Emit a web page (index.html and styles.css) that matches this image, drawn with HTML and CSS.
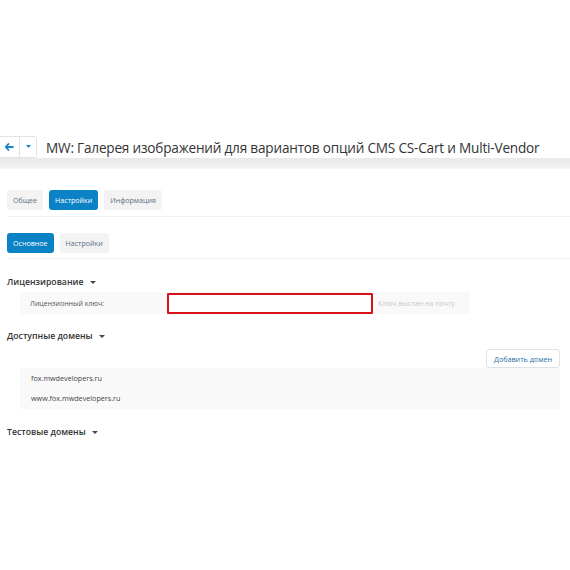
FILE: index.html
```html
<!DOCTYPE html>
<html lang="en">

<head>
    <meta charset="UTF-8">
    <link rel="stylesheet" href="styles.css">
</head>

<body>
    <div class="page">
        <div class="title-bar">
            <div class="nav-group">
                <button class="nav-btn nav-back">
                    <svg width="9" height="8" viewBox="0 0 9 8"><path d="M4 0.5 L0.8 4 L4 7.5 M1 4 H8.5" fill="none" stroke="#1a82c8" stroke-width="1.8"/></svg>
                </button>
                <button class="nav-btn nav-more">
                    <svg width="5" height="3" viewBox="0 0 5 3"><path d="M0 0 H5 L2.5 3 Z" fill="#1a82c8"/></svg>
                </button>
            </div>
            <h1 class="page-title">MW: Галерея изображений для вариантов опций CMS CS-Cart и Multi-Vendor</h1>
        </div>
        <div class="title-shadow"></div>

        <div class="content">
            <div class="tabs">
                <span class="tab">Общее</span>
                <span class="tab active">Настройки</span>
                <span class="tab">Информация</span>
            </div>

            <div class="tabs sub-tabs">
                <span class="tab active">Основное</span>
                <span class="tab">Настройки</span>
            </div>

            <h2 class="section-title">Лицензирование <span class="caret"></span></h2>
            <div class="field-row">
                <label class="field-label">Лицензионный ключ:</label>
                <div class="field-input"></div>
                <span class="field-hint">Ключ выслан на почту</span>
            </div>

            <h2 class="section-title domains-title">Доступные домены <span class="caret"></span></h2>
            <div class="toolbar">
                <button class="add-button">Добавить домен</button>
            </div>
            <div class="domain-list">
                <div class="domain">fox.mwdevelopers.ru</div>
                <div class="domain">www.fox.mwdevelopers.ru</div>
            </div>

            <h2 class="section-title test-title">Тестовые домены <span class="caret"></span></h2>
        </div>
    </div>
</body>

</html>
```

FILE: styles.css
```css
body {
    margin: 0;
    font-family: "Open Sans", "Noto Sans", Arial, sans-serif;
    background-color: #fff;
    color: #333;
}

.page {
    padding-top: 136px;
}

.title-bar {
    display: flex;
    align-items: center;
    height: 21px;
}

.nav-group {
    display: flex;
    border: 1px solid #e3e3e3;
    border-left: none;
    border-radius: 0 3px 3px 0;
    height: 20px;
}

.nav-btn {
    background: #fff;
    border: none;
    padding: 0;
    display: flex;
    align-items: center;
    justify-content: center;
    cursor: pointer;
}

.nav-back {
    width: 20px;
    border-right: 1px solid #e3e3e3;
}

.nav-more {
    width: 16px;
}

.page-title {
    margin: 1px 0 0 9px;
    font-size: 13.6px;
    letter-spacing: -0.2px;
    font-weight: 400;
    color: #333;
    white-space: nowrap;
}

.title-shadow {
    margin-top: 1px;
    height: 10px;
    background: linear-gradient(#e9e9e9, #f2f2f2);
    border-bottom: 1px solid #f7f7f7;
}

.content {
    padding: 21px 0 0 7px;
}

.tabs {
    display: flex;
    gap: 6px;
    padding-bottom: 6px;
    border-bottom: 1px solid #f0f0f0;
}

.sub-tabs {
    margin-top: 16px;
    padding-bottom: 5px;
}

.tab {
    display: inline-block;
    height: 20px;
    line-height: 20px;
    padding: 0 6px;
    font-size: 7.1px;
    color: #5a6f82;
    background-color: #f3f3f4;
    border-radius: 3px;
}

.tab.active {
    background-color: #0b82c6;
    color: #fff;
}

.section-title {
    margin: 16px 0 0;
    font-size: 8.7px;
    font-weight: 600;
    color: #333;
    line-height: 14px;
}

.domains-title {
    margin-top: 15px;
}

.test-title {
    margin-top: 16px;
}

.caret {
    display: inline-block;
    margin-left: 4px;
    vertical-align: middle;
    border-left: 3px solid transparent;
    border-right: 3px solid transparent;
    border-top: 3px solid #444;
}

.field-row {
    display: flex;
    align-items: center;
    margin: 3px 0 0 13px;
    width: 450px;
    height: 22px;
    background-color: #f9f9f9;
}

.field-label {
    width: 137px;
    padding-left: 10px;
    font-size: 7px;
    color: #555;
}

.field-input {
    width: 202px;
    height: 17px;
    background: #fff;
    border: 2px solid #d8121b;
    border-radius: 1px;
}

.field-hint {
    margin-left: 5px;
    font-size: 7px;
    color: #c8c8c8;
}

.toolbar {
    display: flex;
    justify-content: flex-end;
    padding-right: 10px;
    margin-top: 6px;
}

.add-button {
    height: 19px;
    padding: 0 7px;
    background: #fff;
    border: 1px solid #dde3ea;
    border-radius: 3px;
    font-family: inherit;
    font-size: 7.2px;
    color: #2a6fa8;
}

.domain-list {
    margin: 0 10px 0 13px;
    padding: 0 0 1px 11px;
    background-color: #f9f9f9;
}

.domain {
    height: 20px;
    line-height: 20px;
    font-size: 7.2px;
    color: #444;
}
```
